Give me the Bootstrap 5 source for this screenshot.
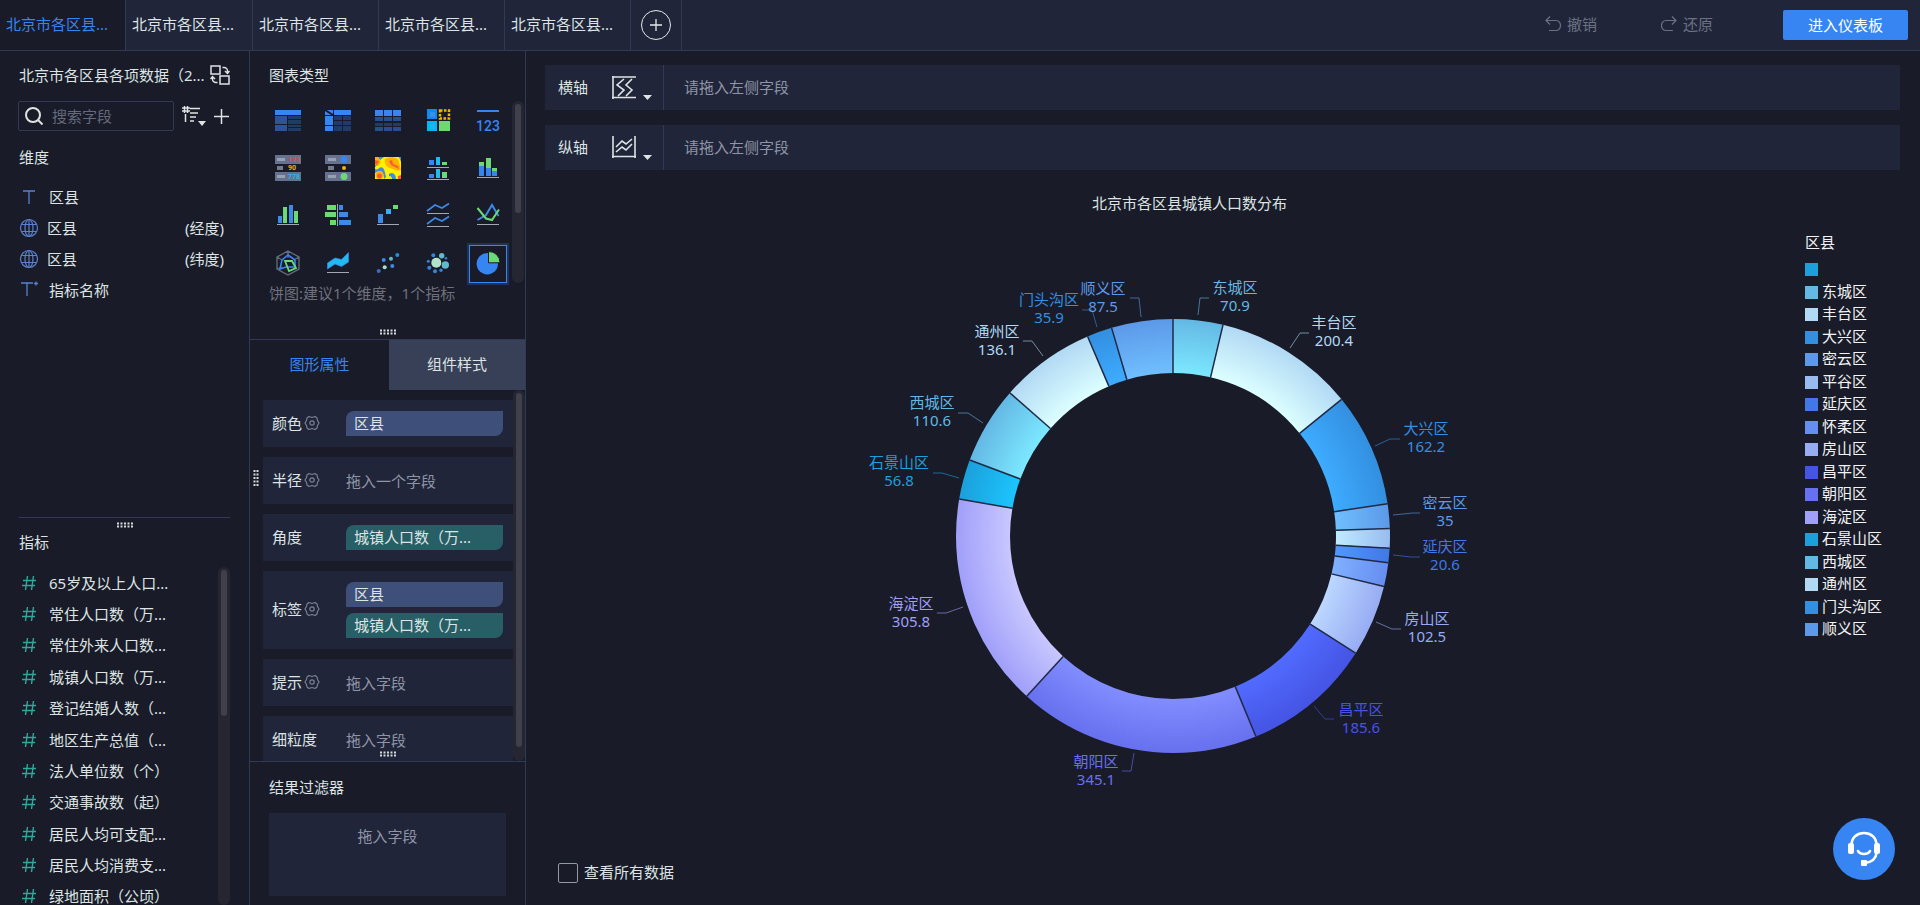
<!DOCTYPE html>
<html lang="zh-CN" data-bs-theme="dark">
<head>
<meta charset="utf-8">
<meta name="viewport" content="width=device-width, initial-scale=1">
<title>北京市各区县城镇人口数分布</title>
<link href="https://cdn.jsdelivr.net/npm/bootstrap@5.3.0/dist/css/bootstrap.min.css" rel="stylesheet">
<style>
:root{--bg:#191b28;--panel:#20253a;--line:#303a56;--txt:#dde4e3;--muted:#8f95a6;--blue:#3685f2}
body{background:var(--bg);color:var(--txt);font:15px/20px "Noto Sans","Noto Sans CJK SC",sans-serif}
svg{display:block;flex:none}
button{color:inherit;font:inherit;background:none;border:0;padding:0}
.topbar{background:var(--panel);border-bottom:1px solid var(--line);height:51px}
.ds-tab{width:126px;padding:0 0 2px 6px;text-align:left;border-right:1px solid var(--line);color:var(--txt);text-decoration:none}
.ds-tab.active{background:var(--bg);color:var(--blue)}
.ds-tab.active + .ds-tab{width:127px}
.tab-add{width:51px;border-right:1px solid var(--line)}
.tool{color:#6c7182;gap:5px;padding-bottom:2px}
.tool + .tool{margin-left:64px}
.go{width:125px;height:30px;margin:0 12px 0 70px;border-radius:2px;background:var(--blue);color:#fff}
.fields{width:250px;border-right:1px solid var(--line);flex:none}
.dims{flex:468 0 0;padding:14px 19px 0}
.measures{flex:386 0 0;margin:0 19px;border-top:1px solid var(--line);position:relative;padding-top:14px}
.search{width:156px;height:30px;border:1px solid var(--line);border-radius:2px;padding-left:6px;gap:8px;margin-left:-1px}
.search input{width:100px;background:none;border:0;outline:0;color:var(--txt);padding:0}
.search input::placeholder{color:#646a7b;opacity:1}
.field{height:31px;display:flex;align-items:center;gap:10px;white-space:nowrap}
.field.geo{gap:8px;padding-right:6px}
.measure-list{display:grid;grid-auto-rows:1fr;margin-bottom:-7px}
.measure-list .field{height:auto}
.track{width:12px;border-radius:6px;background:#252631;padding:3px;flex:none}
.thumb{border-radius:3px;background:#3f404c}
.grip{position:absolute;left:50%;transform:translateX(-50%)}
.config{width:276px;border-right:1px solid var(--line);flex:none;position:relative}
.types{position:relative;padding:14px 1px 36px 19px;border-bottom:1px solid var(--line)}
.type-grid{display:grid;grid-template-columns:repeat(5,38px);gap:10px 12px}
.type-grid button{height:38px;display:flex;align-items:center;justify-content:center}
.type-grid .on{border:1px solid var(--blue);box-shadow:0 0 0 2px #1f3154}
.hint{color:#6e717b}
.attr-tab{height:50px;flex:1;padding-bottom:2px}
.attr-tab.active{color:var(--blue)}
.attr-tab:not(.active){background:#384057;flex:none;width:136px}
.attrs{gap:10px;padding:10px 0 0 13px}
.attr{background:var(--panel);min-height:47px;padding:11px 10px 11px 9px;flex:none}
.attr-name{width:74px;gap:2px;padding-bottom:2px}
.drop{color:var(--muted)}
.chip{height:25px;border-radius:8px 0;background:#3e5079;padding:2px 8px}
.chip.m{background:#285e66}
.filter{position:relative;padding:15px 19px 9px;height:144px;border-top:1px solid var(--line)}
.filter-box{background:var(--panel);margin-top:16px;padding-top:13px;height:83px;text-align:center}
.canvas{padding:14px 20px 21px 19px}
.shelf{background:var(--panel);height:45px;margin-bottom:15px}
.shelf > .drop,.shelf-head > span{padding-bottom:2px}
.shelf-head{width:119px;height:45px;padding-left:13px;border-right:1px solid var(--line)}
.pie-title{padding:8px 66px 0 0;text-align:center}
.pie-box{padding-bottom:6px}
.pie text{font-size:15px;text-anchor:middle}
.pie polyline{fill:none;opacity:.6}
.legend-box{width:99px;padding:19px 0 0 4px;color:#f1f3f5}
.legend-list{display:grid;height:383px;margin-top:6px;grid-auto-rows:1fr;padding:0;list-style:none}
.legend-list li{display:flex;align-items:flex-start;gap:4px}
.legend-list i{width:13px;height:13px;margin-top:5px}
.all-data{padding-left:13px;gap:6px}
.all-data span{padding-bottom:2px}
.all-data input{appearance:none;width:20px;height:20px;margin:0;border:1px solid #9298a4;border-radius:2px;background:none}
.help{position:fixed;right:25px;bottom:25px;width:62px;height:62px;border-radius:50%;background:var(--blue);display:flex;align-items:center;justify-content:center}
</style>
</head>
<body class="vh-100 d-flex flex-column overflow-hidden">
<svg width="0" height="0" class="position-absolute" aria-hidden="true">
  <defs>
    <symbol id="hash" viewBox="0 0 20 20"><path d="M8.500 3L6.500 17M14.500 3L12.500 17M4 7.500H17M3 12.500H16" fill="none" stroke="#2fa99a" stroke-width="1.400"/></symbol>
    <symbol id="globe" viewBox="0 0 20 20"><g fill="none" stroke="#5a80cf" stroke-width="1.200"><circle cx="10" cy="10" r="8.500"/><ellipse cx="10" cy="10" rx="4" ry="8.500"/><path d="M10 1.500V18.500M2.500 6.500H17.500M2.500 13.500H17.500"/></g></symbol>
    <symbol id="gear" viewBox="0 0 16 16"><g fill="none" stroke="#7b8192" stroke-width="1.200"><path d="M5 1.500L8 2.500L11 1.500L13 3L13.500 5.500L15 8L13.500 10.500L13 13L11 14.500L8 13.500L5 14.500L3 13L2.500 10.500L1 8L2.500 5.500L3 3Z" stroke-linejoin="round"/><circle cx="8" cy="8" r="2.200"/></g></symbol>
    <symbol id="dots" viewBox="0 0 18 6"><path d="M1 1.500H18M1 4.500H18" stroke="#d5dbdc" stroke-width="2" stroke-dasharray="2 1.500"/></symbol>
  </defs>
</svg>

<header class="topbar d-flex align-items-stretch flex-shrink-0">
  <nav class="d-flex">
    <a href="#" class="ds-tab active d-flex align-items-center">北京市各区县...</a>
    <a href="#" class="ds-tab d-flex align-items-center">北京市各区县...</a>
    <a href="#" class="ds-tab d-flex align-items-center">北京市各区县...</a>
    <a href="#" class="ds-tab d-flex align-items-center">北京市各区县...</a>
    <a href="#" class="ds-tab d-flex align-items-center">北京市各区县...</a>
    <button class="tab-add d-flex align-items-center justify-content-center" aria-label="添加"><svg width="32" height="32" viewBox="0 0 32 32" fill="none" stroke="#e4eaea"><circle cx="16" cy="16" r="14.500"/><path d="M16 10V22M10 16H22" stroke-width="1.300"/></svg></button>
  </nav>
  <div class="d-flex align-items-center ms-auto">
    <button class="tool d-flex align-items-center"><svg width="17" height="16" viewBox="0 0 17 16" fill="none" stroke="currentColor" stroke-width="1.200"><path d="M5 .5L1 4.500L5 8.500M1 4.500H11A4.500 5 0 0 1 11 14.500H4"/></svg>撤销</button>
    <button class="tool d-flex align-items-center"><svg width="17" height="16" viewBox="0 0 17 16" fill="none" stroke="currentColor" stroke-width="1.200"><path d="M11 .5L15 4.500L11 8.500M15 4.500H5A4.500 5 0 0 0 5 14.500H12"/></svg>还原</button>
    <button class="go">进入仪表板</button>
  </div>
</header>

<div class="d-flex flex-fill overflow-hidden">
  <aside class="fields d-flex flex-column">
    <section class="dims">
      <div class="d-flex align-items-center justify-content-between text-nowrap">
        <span>北京市各区县各项数据（2...</span>
        <button aria-label="切换数据集"><svg width="20" height="20" viewBox="0 0 20 20" fill="none" stroke="#dde4e3" stroke-width="1.500"><rect x="1" y="1" width="9" height="8"/><rect x="10" y="11" width="9" height="8"/><path d="M12.500 2.500H14A3.500 3.500 0 0 1 17.500 6V8M15 6L17.500 8.500L19.500 6M7.500 17.500H6A3.500 3.500 0 0 1 2.500 14V12M.5 14L2.500 11.500L5 14"/></svg></button>
      </div>
      <div class="d-flex align-items-center" style="margin-top:16px">
        <label class="search d-flex align-items-center"><svg width="19" height="20" viewBox="0 0 19 20" fill="none" stroke="#dde4e3" stroke-width="2"><circle cx="8" cy="9" r="7"/><path d="M13 14L17.500 18.500"/></svg><input type="text" placeholder="搜索字段" aria-label="搜索字段"></label>
        <button class="ms-2" aria-label="排序"><svg width="25" height="22" viewBox="0 0 25 22" fill="none" stroke="#dde4e3" stroke-width="1.500"><path d="M2.500 1V8M5.500 1V8M0 3H8M0 6H8M8 3.500H18M8 8H16M8 12H14M3.500 9V17M8 16H12"/><path d="M16 16H24L20 21Z" fill="#dde4e3" stroke="none"/></svg></button>
        <button class="ms-auto" aria-label="新建字段"><svg width="17" height="17" viewBox="0 0 17 17" stroke="#dde4e3" stroke-width="1.500"><path d="M8.500 1V16M1 8.500H16"/></svg></button>
      </div>
      <div style="margin-top:16px">维度</div>
      <div style="margin-top:14px">
        <div class="field"><svg width="20" height="20" viewBox="0 0 20 20" stroke="#5a80cf" stroke-width="1.300"><path d="M4 4H16M10 4V17"/></svg>区县</div>
        <div class="field geo"><svg width="20" height="20"><use href="#globe"/></svg>区县<span class="ms-auto">(经度)</span></div>
        <div class="field geo"><svg width="20" height="20"><use href="#globe"/></svg>区县<span class="ms-auto">(纬度)</span></div>
        <div class="field"><svg width="20" height="20" viewBox="0 0 20 20" stroke="#5a80cf" stroke-width="1.300"><path d="M2 3H14M8 3V16M15 3.500H19M17 1.500V5.500"/></svg>指标名称</div>
      </div>
    </section>
    <section class="measures d-flex flex-column">
      <svg class="grip" style="top:4px" width="18" height="6"><use href="#dots"/></svg>
      <div>指标</div>
      <div class="d-flex flex-fill" style="margin-top:15px;min-height:0">
        <div class="measure-list flex-fill">
          <div class="field"><svg width="20" height="20"><use href="#hash"/></svg>65岁及以上人口...</div>
          <div class="field"><svg width="20" height="20"><use href="#hash"/></svg>常住人口数（万...</div>
          <div class="field"><svg width="20" height="20"><use href="#hash"/></svg>常住外来人口数...</div>
          <div class="field"><svg width="20" height="20"><use href="#hash"/></svg>城镇人口数（万...</div>
          <div class="field"><svg width="20" height="20"><use href="#hash"/></svg>登记结婚人数（...</div>
          <div class="field"><svg width="20" height="20"><use href="#hash"/></svg>地区生产总值（...</div>
          <div class="field"><svg width="20" height="20"><use href="#hash"/></svg>法人单位数（个）</div>
          <div class="field"><svg width="20" height="20"><use href="#hash"/></svg>交通事故数（起）</div>
          <div class="field"><svg width="20" height="20"><use href="#hash"/></svg>居民人均可支配...</div>
          <div class="field"><svg width="20" height="20"><use href="#hash"/></svg>居民人均消费支...</div>
          <div class="field"><svg width="20" height="20"><use href="#hash"/></svg>绿地面积（公顷）</div>
        </div>
        <div class="track"><div class="thumb" style="height:44%"></div></div>
      </div>
    </section>
  </aside>

  <aside class="config d-flex flex-column">
    <section class="types">
      <div>图表类型</div>
      <div class="d-flex" style="margin-top:16px">
        <div class="type-grid flex-fill">
          <button aria-label="分组表"><svg width="28" height="28"><path fill="#3685f2" d="M1 4h26v5H1z"/><path fill="#2a5596" d="M1 10h12v8H1zM1 19h12v6H1z"/><path fill="#1f3c68" d="M14 10h13v3H14zM14 14h13v4H14zM14 19h13v2H14zM14 22h13v3H14z"/></svg></button>
          <button aria-label="交叉表"><svg width="28" height="28"><path fill="#3685f2" d="M1 4h8v5H1zM10 4h17v5H10zM1 10h8v9H1zM1 20h8v5H1z"/><path d="M1 4L9 9" stroke="#191b28" stroke-width="2"/><path fill="#1f3c68" d="M10 10h8v4h-8zM19 10h8v4h-8zM10 15h8v4h-8zM19 15h8v4h-8zM10 20h8v5h-8zM19 20h8v5h-8z"/></svg></button>
          <button aria-label="明细表"><svg width="28" height="28"><path fill="#3685f2" d="M1 4h8v6H1zM10 4h8v6h-8zM19 4h8v6h-8z"/><path fill="#264f8c" d="M1 11h8v4H1zM10 11h8v4h-8zM19 11h8v4h-8zM1 21h8v4H1zM10 21h8v4h-8zM19 21h8v4h-8z"/><path fill="#1f3c68" d="M1 17h8v3H1zM10 17h8v3h-8zM19 17h8v3h-8z"/></svg></button>
          <button aria-label="颜色表格"><svg width="28" height="28"><path fill="#0d8cf0" d="M3 3h10v10H3z"/><path fill="#3b8fe8" d="M6 6h5v5H6z"/><path fill="none" stroke="#f7b500" stroke-width="2.500" stroke-dasharray="2.500 1.500" d="M16 4.500h9v8h-9z"/><path fill="#00b9f5" d="M3 15h10v10H3z"/><path fill="#22b3ea" d="M6 18h5v5H6z"/><path fill="#6cd975" d="M15 15h11v10H15z"/></svg></button>
          <button aria-label="指标卡"><svg width="28" height="28"><path fill="#3685f2" d="M3 4h22v2H3z"/><text x="14" y="25" text-anchor="middle" font-family="Roboto,sans-serif" font-size="14" font-weight="500" fill="#3685f2">123</text></svg></button>

          <button aria-label="KPI 指标"><svg width="28" height="28" font-family="Roboto,sans-serif" font-size="7" font-weight="700"><path fill="#66718f" d="M1 1h26v9H1zM1 18h26v9H1z"/><path fill="#99a0b0" d="M3 4h8v3H3zM3 21h8v3H3z"/><path fill="#777b89" d="M3 12h6v4H3z"/><text x="14" y="8" fill="#e8484f">123</text><text x="14" y="16" fill="#f7b500">90</text><text x="14" y="25" fill="#26b6e8">778</text></svg></button>
          <button aria-label="状态列表"><svg width="28" height="28"><path fill="#66718f" d="M1 1h26v9H1zM1 18h26v9H1z"/><path fill="#99a0b0" d="M4 4h8v3H4zM4 21h8v3H4z"/><path fill="#777b89" d="M4 12h6v4H4z"/><circle cx="20" cy="5.500" r="3.500" fill="#3685f2"/><circle cx="20" cy="14" r="2" fill="#f7b500"/><circle cx="20" cy="22.500" r="3.500" fill="#6cd975"/></svg></button>
          <button aria-label="热力图"><svg width="28" height="28" viewBox="0 0 28 28"><path fill="#fff000" d="M1 3h26v22H1z"/><path fill="#3f8be0" d="M4 3h6l-4 3zM1 10l3-2 1 2-4 3zM1 15c3 2 5-4 8-1 2 2 2 6 3 9l-2 2c0-5-2-8-5-8l-4 2zM15 20c4-3 7 1 7 5h-4c0-2-1-3-3-3zM25 3h2v5z"/><path fill="#ffb300" d="M11 5c5-3 13-2 14 3l2 8c-5 2-7-1-11-2-4-1-6-5-5-9zM1 3h3l3 5-3 4-3-1z"/><path fill="#fa5a3c" d="M1 6l4 1-2 4-2-1zM15 7l2 4 8 4-1-3-5-2-1-4z"/><circle cx="5.500" cy="21" r="4" fill="#ffb300"/><circle cx="5.500" cy="22" r="2.500" fill="#fa5a3c"/><path fill="#fa5a3c" d="M24 22l3-1v4h-3z"/></svg></button>
          <button aria-label="分区柱形图"><svg width="28" height="28"><path fill="#3685f2" d="M5 6h5v5H5zM5 20h5v4H5z"/><path fill="#22b9f0" d="M12 3h4v8h-4zM12 15h4v9h-4z"/><path fill="#6cd975" d="M18 8h5v3h-5zM18 18h5v6h-5z"/><path fill="#a3a7b1" d="M3 13h22v1H3zM3 25h22v1H3z"/></svg></button>
          <button aria-label="堆积柱形图"><svg width="28" height="28"><path fill="#3685f2" d="M5 12h5v10H5zM12 14h5v8h-5zM18 16h5v6h-5z"/><path fill="#6cd975" d="M5 8h5v4H5zM12 4h5v10h-5zM18 14h5v3h-5z"/><path fill="#a3a7b1" d="M3 23h22v1H3z"/></svg></button>

          <button aria-label="多系列柱形图"><svg width="28" height="28"><path fill="#3d8ae8" d="M4 14h4v7H4zM15 3h4v18h-4z"/><path fill="#6cd975" d="M9 5h4v16H9zM20 9h4v12h-4z"/><path fill="#a3a7b1" d="M3 22h22v1H3z"/></svg></button>
          <button aria-label="对比条形图"><svg width="28" height="28"><path fill="#6cd975" d="M3 3h9v5H3zM1 10h11v5H1zM6 18h6v5H6z"/><path fill="#3d8ae8" d="M15 3h4v5h-4zM15 10h9v5h-9zM15 18h12v5H15z"/><path fill="#a3a7b1" d="M13 2h1v22h-1z"/></svg></button>
          <button aria-label="瀑布图"><svg width="28" height="28"><path fill="#3d8ae8" d="M4 12h5v9H4z"/><path fill="#22b9f0" d="M12 7h5v5h-5z"/><path fill="#6cd975" d="M19 3h5v4h-5z"/><path fill="#a3a7b1" d="M3 22h22v1H3z"/></svg></button>
          <button aria-label="分区折线图"><svg width="28" height="28" fill="none" stroke="#3d8ae8" stroke-width="1.600"><path d="M3 9L11 3L18 6L25 1.500M3 22L11 16L18 19L25 14.500"/><path d="M3 11.500H25M3 24.500H25" stroke="#a3a7b1" stroke-width="1"/></svg></button>
          <button aria-label="多系列折线图"><svg width="28" height="28" fill="none" stroke-width="2"><path stroke="#3d8ae8" d="M3.500 18L12 13L18 3L24.500 14"/><path stroke="#6cd975" d="M3.500 6L12 16.500L18 18L25 7.500"/><path d="M3 22.500H25" stroke="#a3a7b1" stroke-width="1"/></svg></button>

          <button aria-label="雷达图"><svg width="28" height="28" fill="none"><path stroke="#686d7b" stroke-width="1.300" d="M14 1L25 7V19L14 25L3 19V7ZM14 1V8M3 7L8 10M25 7L20 10M3 19L8 17"/><path stroke="#3685f2" stroke-width="1.600" d="M14 5L21 10V17L12 17L6 19L8 10Z"/><path stroke="#6cd975" stroke-width="1.800" d="M11 11H18L22 18L15 21Z"/></svg></button>
          <button aria-label="面积图"><svg width="28" height="28"><path fill="#22b9f0" stroke="#3685f2" stroke-width=".7" d="M3.500 13L11 8L17.500 9.500L24.500 2.500V12L17.500 16.500L11 14L3.500 19Z"/><path fill="#a3a7b1" d="M3 22h22v1H3z"/></svg></button>
          <button aria-label="散点图"><svg width="28" height="28"><g fill="#3d8ae8"><circle cx="9.700" cy="10" r="2"/><circle cx="18.300" cy="16" r="2"/></g><circle cx="4.700" cy="21" r="2" fill="#3f6bc4"/><circle cx="10.700" cy="17.300" r="2" fill="#a7dfcf"/><circle cx="17" cy="8.700" r="2" fill="#60bacb"/><circle cx="23.300" cy="5" r="2" fill="#2390de"/></svg></button>
          <button aria-label="聚合气泡图"><svg width="28" height="28"><circle cx="12.300" cy="12.700" r="5" fill="#b0e5cc"/><g fill="#60bacb"><circle cx="17.700" cy="5.700" r="2.700"/><circle cx="21.300" cy="15" r="3.700"/></g><g fill="#3285d8"><circle cx="9.300" cy="5.300" r="2"/><circle cx="22" cy="8.300" r="1.300"/><circle cx="4.300" cy="11.300" r="1.500"/><circle cx="5.300" cy="17.700" r="2"/><circle cx="11" cy="21.300" r="2"/><circle cx="17" cy="20.300" r="1.700"/></g></svg></button>
          <button class="on" aria-label="饼图" aria-pressed="true"><svg width="28" height="28"><circle cx="13.300" cy="13.700" r="10.700" fill="#3685f2"/><path fill="#6cd975" stroke="#191b28" d="M14.500 1.500A11 11 0 0 1 26 12.800H14.500Z"/></svg></button>
        </div>
        <div class="track"><div class="thumb" style="height:62%"></div></div>
      </div>
      <div class="hint">饼图:建议1个维度，1个指标</div>
      <svg class="grip" style="bottom:4px" width="18" height="6"><use href="#dots"/></svg>
    </section>

    <div class="d-flex flex-shrink-0">
      <button class="attr-tab active">图形属性</button>
      <button class="attr-tab">组件样式</button>
    </div>
    <section class="d-flex flex-fill overflow-hidden" style="height:0">
      <div class="attrs d-flex flex-column flex-fill">
        <div class="attr d-flex align-items-center"><div class="attr-name d-flex align-items-center">颜色<svg width="16" height="16"><use href="#gear"/></svg></div><div class="chip flex-fill">区县</div></div>
        <div class="attr d-flex align-items-center"><div class="attr-name d-flex align-items-center">半径<svg width="16" height="16"><use href="#gear"/></svg></div><div class="drop">拖入一个字段</div></div>
        <div class="attr d-flex align-items-center"><div class="attr-name">角度</div><div class="chip m flex-fill">城镇人口数（万...</div></div>
        <div class="attr d-flex align-items-center"><div class="attr-name d-flex align-items-center">标签<svg width="16" height="16"><use href="#gear"/></svg></div><div class="d-grid flex-fill" style="gap:6px"><div class="chip">区县</div><div class="chip m">城镇人口数（万...</div></div></div>
        <div class="attr d-flex align-items-center"><div class="attr-name d-flex align-items-center">提示<svg width="16" height="16"><use href="#gear"/></svg></div><div class="drop">拖入字段</div></div>
        <div class="attr d-flex align-items-center"><div class="attr-name">细粒度</div><div class="drop">拖入字段</div></div>
      </div>
      <div class="track"><div class="thumb" style="height:97%"></div></div>
    </section>
    <section class="filter flex-shrink-0">
      <svg class="grip" style="top:-11px" width="18" height="6"><use href="#dots"/></svg>
      <div>结果过滤器</div>
      <div class="filter-box drop">拖入字段</div>
    </section>
    <svg class="position-absolute top-50 start-0 translate-middle-y" style="margin-left:3px" width="6" height="18" viewBox="0 0 6 18"><path d="M1.500 1V18M4.500 1V18" stroke="#d5dbdc" stroke-width="2" stroke-dasharray="2 1.500"/></svg>
  </aside>

  <main class="canvas flex-fill d-flex flex-column">
    <div class="shelf d-flex align-items-center flex-shrink-0">
      <div class="shelf-head d-flex align-items-center"><span>横轴</span>
        <button class="d-flex" style="margin-left:23px" aria-label="横轴样式"><svg width="42" height="26" viewBox="0 0 42 26" fill="none" stroke="#dde4e3" stroke-width="1.600"><path d="M2 1V24M1 2H25M1 22.500H25M13 4L6 10L13 15L7 21M21 4L15 10L21 15L15 21"/><path d="M32 20H41L36.500 25Z" fill="#dde4e3" stroke="none"/></svg></button></div>
      <div class="drop" style="padding-left:20px">请拖入左侧字段</div>
    </div>
    <div class="shelf d-flex align-items-center flex-shrink-0">
      <div class="shelf-head d-flex align-items-center"><span>纵轴</span>
        <button class="d-flex" style="margin-left:23px" aria-label="纵轴样式"><svg width="42" height="26" viewBox="0 0 42 26" fill="none" stroke="#dde4e3" stroke-width="1.600"><path d="M2 1V23M24 1V23M1 21.500H25M5 12L11 6L15 9L21 4M5 17L11 12L15 15L21 9"/><path d="M32 20H41L36.500 25Z" fill="#dde4e3" stroke="none"/></svg></button></div>
      <div class="drop" style="padding-left:20px">请拖入左侧字段</div>
    </div>
    <div class="pie-title">北京市各区县城镇人口数分布</div>
    <div class="d-flex flex-fill">
      <div class="pie-box flex-fill d-flex align-items-center justify-content-center">
        <svg class="pie" width="640" height="528" viewBox="-320 -264 640 528">
          <defs>
            <radialGradient id="g1" gradientUnits="userSpaceOnUse" cx="0" cy="0" r="217"><stop offset=".75" stop-color="#7ce8ff"/><stop offset="1" stop-color="#64b8e4"/></radialGradient>
            <radialGradient id="g2" gradientUnits="userSpaceOnUse" cx="0" cy="0" r="217"><stop offset=".75" stop-color="#dcffff"/><stop offset="1" stop-color="#b1d9f4"/></radialGradient>
            <radialGradient id="g3" gradientUnits="userSpaceOnUse" cx="0" cy="0" r="217"><stop offset=".75" stop-color="#3eacff"/><stop offset="1" stop-color="#338fe0"/></radialGradient>
            <radialGradient id="g4" gradientUnits="userSpaceOnUse" cx="0" cy="0" r="217"><stop offset=".75" stop-color="#6fbfff"/><stop offset="1" stop-color="#5c99e8"/></radialGradient>
            <radialGradient id="g5" gradientUnits="userSpaceOnUse" cx="0" cy="0" r="217"><stop offset=".75" stop-color="#beecff"/><stop offset="1" stop-color="#98bcf0"/></radialGradient>
            <radialGradient id="g6" gradientUnits="userSpaceOnUse" cx="0" cy="0" r="217"><stop offset=".75" stop-color="#5098ff"/><stop offset="1" stop-color="#4178e6"/></radialGradient>
            <radialGradient id="g7" gradientUnits="userSpaceOnUse" cx="0" cy="0" r="217"><stop offset=".75" stop-color="#80b1ff"/><stop offset="1" stop-color="#668df0"/></radialGradient>
            <radialGradient id="g8" gradientUnits="userSpaceOnUse" cx="0" cy="0" r="217"><stop offset=".75" stop-color="#bcd7ff"/><stop offset="1" stop-color="#97acf3"/></radialGradient>
            <radialGradient id="g9" gradientUnits="userSpaceOnUse" cx="0" cy="0" r="217"><stop offset=".75" stop-color="#516bff"/><stop offset="1" stop-color="#4554e4"/></radialGradient>
            <radialGradient id="g10" gradientUnits="userSpaceOnUse" cx="0" cy="0" r="217"><stop offset=".75" stop-color="#818dff"/><stop offset="1" stop-color="#6770ee"/></radialGradient>
            <radialGradient id="g11" gradientUnits="userSpaceOnUse" cx="0" cy="0" r="217"><stop offset=".75" stop-color="#c8c7ff"/><stop offset="1" stop-color="#a09ffa"/></radialGradient>
            <radialGradient id="g12" gradientUnits="userSpaceOnUse" cx="0" cy="0" r="217"><stop offset=".75" stop-color="#1cc5fd"/><stop offset="1" stop-color="#1ba0dc"/></radialGradient>
          </defs>
          <!-- ring: path length equals the total, so each dash is the district's value -->
          <g fill="none" stroke-width="54" transform="translate(0 1) rotate(-90)">
            <circle r="190" pathLength="1916.5" stroke="url(#g1)" stroke-dasharray="70.9 1916.5"/>
            <circle r="190" pathLength="1916.5" stroke="url(#g2)" stroke-dasharray="200.4 1916.5" stroke-dashoffset="-70.9"/>
            <circle r="190" pathLength="1916.5" stroke="url(#g3)" stroke-dasharray="162.2 1916.5" stroke-dashoffset="-271.3"/>
            <circle r="190" pathLength="1916.5" stroke="url(#g4)" stroke-dasharray="35 1916.5" stroke-dashoffset="-433.5"/>
            <circle r="190" pathLength="1916.5" stroke="url(#g5)" stroke-dasharray="27.7 1916.5" stroke-dashoffset="-468.5"/>
            <circle r="190" pathLength="1916.5" stroke="url(#g6)" stroke-dasharray="20.6 1916.5" stroke-dashoffset="-496.2"/>
            <circle r="190" pathLength="1916.5" stroke="url(#g7)" stroke-dasharray="33.8 1916.5" stroke-dashoffset="-516.8"/>
            <circle r="190" pathLength="1916.5" stroke="url(#g8)" stroke-dasharray="102.5 1916.5" stroke-dashoffset="-550.6"/>
            <circle r="190" pathLength="1916.5" stroke="url(#g9)" stroke-dasharray="185.6 1916.5" stroke-dashoffset="-653.1"/>
            <circle r="190" pathLength="1916.5" stroke="url(#g10)" stroke-dasharray="345.1 1916.5" stroke-dashoffset="-838.7"/>
            <circle r="190" pathLength="1916.5" stroke="url(#g11)" stroke-dasharray="305.8 1916.5" stroke-dashoffset="-1183.8"/>
            <circle r="190" pathLength="1916.5" stroke="url(#g12)" stroke-dasharray="56.8 1916.5" stroke-dashoffset="-1489.6"/>
            <circle r="190" pathLength="1916.5" stroke="url(#g1)" stroke-dasharray="110.6 1916.5" stroke-dashoffset="-1546.4"/>
            <circle r="190" pathLength="1916.5" stroke="url(#g2)" stroke-dasharray="136.1 1916.5" stroke-dashoffset="-1657"/>
            <circle r="190" pathLength="1916.5" stroke="url(#g3)" stroke-dasharray="35.9 1916.5" stroke-dashoffset="-1793.1"/>
            <circle r="190" pathLength="1916.5" stroke="url(#g4)" stroke-dasharray="87.5 1916.5" stroke-dashoffset="-1829"/>
          </g>
          <g stroke="#202a44" stroke-width="1.500" transform="translate(0 1)">
            <path d="M0-163V-217"/>
            <path d="M0-163V-217" transform="rotate(13.32)"/>
            <path d="M0-163V-217" transform="rotate(50.96)"/>
            <path d="M0-163V-217" transform="rotate(81.43)"/>
            <path d="M0-163V-217" transform="rotate(88)"/>
            <path d="M0-163V-217" transform="rotate(93.21)"/>
            <path d="M0-163V-217" transform="rotate(97.08)"/>
            <path d="M0-163V-217" transform="rotate(103.43)"/>
            <path d="M0-163V-217" transform="rotate(122.68)"/>
            <path d="M0-163V-217" transform="rotate(157.54)"/>
            <path d="M0-163V-217" transform="rotate(222.37)"/>
            <path d="M0-163V-217" transform="rotate(279.81)"/>
            <path d="M0-163V-217" transform="rotate(290.48)"/>
            <path d="M0-163V-217" transform="rotate(311.26)"/>
            <path d="M0-163V-217" transform="rotate(336.82)"/>
            <path d="M0-163V-217" transform="rotate(343.56)"/>
          </g>
          <g fill="#64b8e4"><text x="62" y="-242">东城区</text><text x="62" y="-224">70.9</text><polyline points="25,-220 27,-237 36,-237" stroke="#64b8e4"/></g>
          <g fill="#b1d9f4"><text x="161" y="-207">丰台区</text><text x="161" y="-189">200.4</text><polyline points="117,-187 127,-202 136,-202" stroke="#b1d9f4"/></g>
          <g fill="#338fe0"><text x="253" y="-101">大兴区</text><text x="253" y="-83">162.2</text><polyline points="202,-89 217,-96 227,-96" stroke="#338fe0"/></g>
          <g fill="#5c99e8"><text x="272" y="-27">密云区</text><text x="272" y="-9">35</text><polyline points="220,-20 240,-22 247,-22" stroke="#5c99e8"/></g>
          <g fill="#4178e6"><text x="272" y="17">延庆区</text><text x="272" y="35">20.6</text><polyline points="220,20 238,22 247,22" stroke="#4178e6"/></g>
          <g fill="#97acf3"><text x="254" y="89">房山区</text><text x="254" y="107">102.5</text><polyline points="203,87 219,94 228,94" stroke="#97acf3"/></g>
          <g fill="#4554e4"><text x="188" y="180">昌平区</text><text x="188" y="198">185.6</text><polyline points="141,171 152,184 161,184" stroke="#4554e4"/></g>
          <g fill="#6770ee"><text x="-77" y="232">朝阳区</text><text x="-77" y="250">345.1</text><polyline points="-39,218 -42,236 -51,236" stroke="#6770ee"/></g>
          <g fill="#a09ffa"><text x="-262" y="74">海淀区</text><text x="-262" y="92">305.8</text><polyline points="-210,72 -227,78 -236,78" stroke="#a09ffa"/></g>
          <g fill="#1ba0dc"><text x="-274" y="-67">石景山区</text><text x="-274" y="-49">56.8</text><polyline points="-214,-57 -231,-62 -240,-62" stroke="#1ba0dc"/></g>
          <g fill="#64b8e4"><text x="-241" y="-127">西城区</text><text x="-241" y="-109">110.6</text><polyline points="-190,-112 -205,-122 -215,-122" stroke="#64b8e4"/></g>
          <g fill="#b1d9f4"><text x="-176" y="-198">通州区</text><text x="-176" y="-180">136.1</text><polyline points="-130,-179 -141,-194 -150,-194" stroke="#b1d9f4"/></g>
          <g fill="#338fe0"><text x="-124" y="-230">门头沟区</text><text x="-124" y="-212">35.9</text><polyline points="-76,-208 -81,-225 -91,-225" stroke="#338fe0"/></g>
          <g fill="#5c99e8"><text x="-70" y="-241">顺义区</text><text x="-70" y="-223">87.5</text><polyline points="-32,-218 -34,-237 -43,-237" stroke="#5c99e8"/></g>
        </svg>
      </div>
      <div class="legend-box flex-shrink-0">
        <div>区县</div>
        <ul class="legend-list mb-0">
          <li><i style="background:#1ba0dc"></i></li>
          <li><i style="background:#64b8e4"></i>东城区</li>
          <li><i style="background:#b1d9f4"></i>丰台区</li>
          <li><i style="background:#338fe0"></i>大兴区</li>
          <li><i style="background:#5c99e8"></i>密云区</li>
          <li><i style="background:#98bcf0"></i>平谷区</li>
          <li><i style="background:#4178e6"></i>延庆区</li>
          <li><i style="background:#668df0"></i>怀柔区</li>
          <li><i style="background:#97acf3"></i>房山区</li>
          <li><i style="background:#4554e4"></i>昌平区</li>
          <li><i style="background:#6770ee"></i>朝阳区</li>
          <li><i style="background:#a09ffa"></i>海淀区</li>
          <li><i style="background:#1ba0dc"></i>石景山区</li>
          <li><i style="background:#64b8e4"></i>西城区</li>
          <li><i style="background:#b1d9f4"></i>通州区</li>
          <li><i style="background:#338fe0"></i>门头沟区</li>
          <li><i style="background:#5c99e8"></i>顺义区</li>
        </ul>
      </div>
    </div>
    <label class="all-data d-flex align-items-center flex-shrink-0"><input type="checkbox"><span>查看所有数据</span></label>
  </main>
</div>

<button class="help" aria-label="在线客服"><svg width="34" height="36" viewBox="0 0 34 36" fill="none" stroke="#fff" stroke-width="2.600"><path d="M4.500 14C4.500-2 29.500-2 29.500 14V22C29 28 25 31 18 32"/><path d="M11 20C13 24 21 24 23 20" stroke-linecap="round"/><g fill="#fff" stroke="none"><rect x="1" y="12" width="6" height="11" rx="2"/><rect x="27" y="12" width="6" height="11" rx="2"/><rect x="14" y="29" width="6" height="6" rx="1"/></g></svg></button>
<script src="https://cdn.jsdelivr.net/npm/bootstrap@5.3.0/dist/js/bootstrap.bundle.min.js"></script>
</body>
</html>
